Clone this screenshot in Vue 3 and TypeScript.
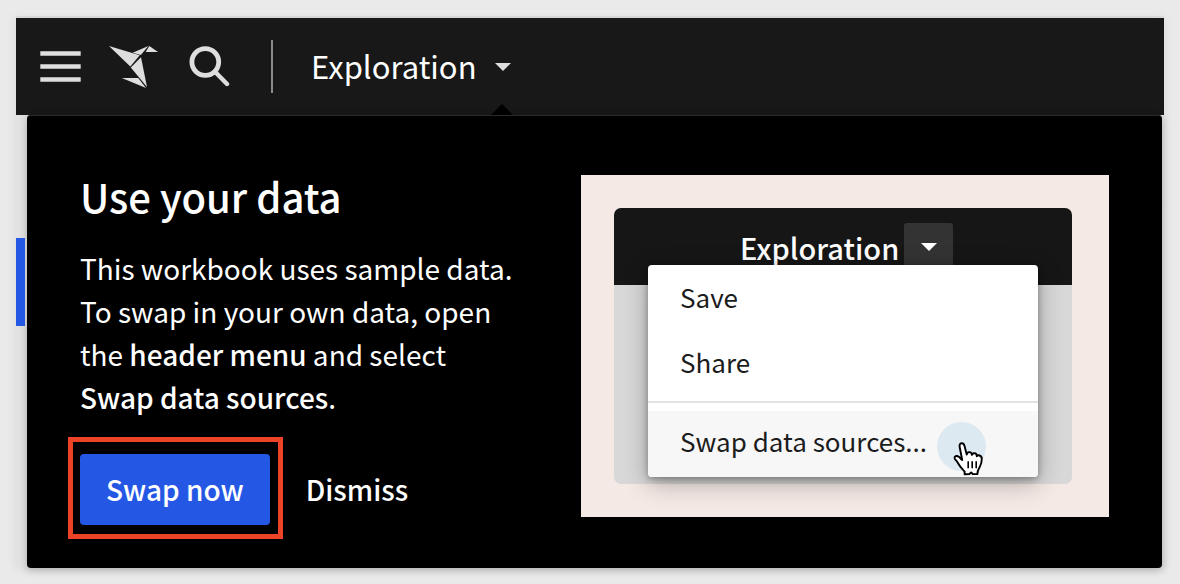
<script setup lang="ts">
import { ref } from 'vue'

interface MenuEntry {
  label: string
  active?: boolean
}

const title = 'Exploration'
const basicEntries: MenuEntry[] = [{ label: 'Save' }, { label: 'Share' }]
const sourceEntries: MenuEntry[] = [{ label: 'Swap data sources...', active: true }]
const open = ref(true)
</script>

<template>
  <main class="window">
    <header class="bar">
      <button class="icon-button" type="button" aria-label="Menu">
        <svg class="icon menu-icon" viewBox="0 0 41 32">
          <path d="M0.3 2.5h40.4M0.3 15.5h40.4M0.3 28.5h40.4" fill="none" stroke="#dedede" stroke-width="4.6" />
        </svg>
      </button>
      <a class="logo" href="#" aria-label="Home">
        <svg class="icon logo-icon" viewBox="0 -2 49 45">
          <g fill="#dedede">
            <path d="M0 0 30.7 9.3 21.3 20.5Z" />
            <path d="M23.6 6.8 39.4 0 31.8 8.9Z" />
            <path d="M40.3 0 49 6.1 36.7 6Z" />
            <path d="M32 11.3 38 41 21.8 21.6Z" />
            <path d="M12.8 32 29.2 32 37 42Z" />
          </g>
        </svg>
      </a>
      <button class="icon-button" type="button" aria-label="Search">
        <svg class="icon search-icon" viewBox="0 0 41 41">
          <circle cx="16.3" cy="16" r="13.4" fill="none" stroke="#dedede" stroke-width="4.8" />
          <path d="M26 25.8 38 38" fill="none" stroke="#dedede" stroke-width="4.4" stroke-linecap="round" />
        </svg>
      </button>
      <span class="rule"></span>
      <button class="workbook" type="button" :aria-expanded="open" @click="open = !open">
        <span class="workbook-name">{{ title }}</span>
        <span class="caret-slot">
          <svg class="caret" viewBox="0 0 16 8"><path d="M0 0h16L8 8Z" fill="#dedede" /></svg>
          <svg v-if="open" class="pointer" viewBox="0 0 22 11"><path d="M0 11 11 0 22 11Z" fill="#000" /></svg>
        </span>
      </button>
    </header>

    <div class="stage">
      <span class="accent"></span>
      <span class="tick"></span>
      <section v-if="open" class="panel">
        <div class="copy">
          <h1>Use your data</h1>
          <p>
            This workbook uses sample data. To swap in your own data, open the
            <strong>header menu</strong> and select <strong>Swap data sources</strong>.
          </p>
          <div class="actions">
            <div class="highlighted">
              <button class="primary" type="button">Swap now</button>
            </div>
            <button class="plain" type="button" @click="open = false">Dismiss</button>
          </div>
        </div>

        <div class="illustration">
          <div class="mock">
            <div class="mock-bar">
              <span class="mock-title">{{ title }}</span>
              <span class="mock-toggle">
                <svg class="mock-caret" viewBox="0 0 16 8"><path d="M0 0h16L8 8Z" fill="#fff" /></svg>
              </span>
            </div>
            <div class="menu">
              <ul class="group">
                <li v-for="entry in basicEntries" :key="entry.label">{{ entry.label }}</li>
              </ul>
              <ul class="group last">
                <li v-for="entry in sourceEntries" :key="entry.label" :class="{ active: entry.active }">
                  {{ entry.label }}
                  <span class="halo">
                    <svg class="hand" viewBox="0 0 32 34">
                      <path
                        d="M11.6 32.2v-2.6C9.8 27 7.4 25.5 5.4 21.8 4.2 19.5 3 18 1.8 16.8 1.2 15.2 2.3 13.6 4.2 14c1.9.5 3.2 2 4.4 3.6L9.2 18 6.7 5.2C6.3 2.9 7 1.4 8.5 1.2c1.5-.2 2.4.7 2.9 2.4l2.3 9c.3-1.7 1.1-2.6 2.7-2.5 1.7.1 2.4 1.2 2.5 2.8.4-1.3 1.5-1.9 2.9-1.6 1.5.3 2.1 1.4 2 2.9.6-.9 1.6-1.1 2.8-.7 1.4.5 2.2 1.7 2.2 3.4 0 4-.9 5.8-2.1 8.2-1.2 2.3-2.3 3.5-2.4 7l-4.6-.1-1.6-1.6-1.7 1.7Z"
                        fill="#fff"
                        stroke="#000"
                        stroke-width="1.9"
                        stroke-linejoin="round"
                      />
                      <path d="M15.2 19.2v7M19.2 19.2v7M23.2 19.2v7" fill="none" stroke="#000" stroke-width="1.6" />
                    </svg>
                  </span>
                </li>
              </ul>
            </div>
          </div>
        </div>
      </section>
    </div>
  </main>
</template>

<style>
body {
  background: #eaeaea;
}
</style>

<style scoped>
.window {
  margin: 18px 16px 16px;
  font-family: 'Noto Sans CJK SC', 'Noto Sans', sans-serif;
  color: #fff;
  background: #e2e2e2;
  box-shadow: 0 0 10px rgba(0, 0, 0, 0.08), 0 -2px 0 rgba(0, 0, 0, 0.05);
}

button {
  font: inherit;
  color: inherit;
  background: none;
  border: 0;
  padding: 0;
  cursor: pointer;
}

svg {
  display: block;
}

.bar {
  display: flex;
  align-items: center;
  height: 97px;
  padding-left: 24px;
  background: #181818;
}

.menu-icon {
  width: 41px;
  height: 32px;
}

.logo {
  margin-left: 28px;
}

.logo-icon {
  width: 49px;
  height: 45px;
}

.search-icon {
  width: 41px;
  height: 41px;
  margin-left: 31px;
}

.rule {
  width: 2px;
  height: 53px;
  margin-left: 41px;
  background: #8a8a8a;
}

.workbook {
  display: flex;
  align-self: stretch;
  align-items: center;
  margin-left: 38px;
  font-size: 31px;
  line-height: 48px;
}

.workbook-name {
  padding-bottom: 2px;
}

.caret-slot {
  position: relative;
  display: flex;
  align-self: stretch;
  align-items: center;
  margin-left: 18px;
}

.caret {
  width: 16px;
  height: 8px;
}

.pointer {
  position: absolute;
  bottom: 0;
  left: -4px;
  width: 22px;
  height: 11px;
}

.stage {
  position: relative;
  padding: 0 2px 0 11px;
}

.accent {
  position: absolute;
  top: 123px;
  left: 0;
  width: 9px;
  height: 88px;
  background: #2458e4;
}

.tick {
  position: absolute;
  top: 86px;
  right: 0;
  width: 2px;
  height: 2px;
  background: #c8c8c8;
}

.panel {
  display: flex;
  align-items: flex-start;
  justify-content: space-between;
  gap: 40px;
  padding: 57px 53px 43px;
  background: #000;
  border-radius: 4px;
  box-shadow: inset 0 1px 0 #2a2a2a, 0 2px 8px rgba(0, 0, 0, 0.24);
}

.copy {
  flex: 0 1 436px;
}

h1 {
  margin: 0;
  font-size: 40px;
  font-weight: 500;
  line-height: 48px;
}

p {
  margin: 27px 0 35px;
  font-size: 28px;
  line-height: 43px;
}

strong {
  font-weight: 500;
}

.actions {
  display: flex;
  align-items: center;
  gap: 36px;
  font-size: 28px;
  font-weight: 500;
  line-height: 43px;
}

.highlighted {
  position: relative;
}

.highlighted::after {
  content: '';
  position: absolute;
  inset: -17px -13px -14px -12px;
  border: 5px solid #ec4226;
  pointer-events: none;
}

.primary {
  padding: 14px 26px;
  background: #2458e4;
  border-radius: 4px;
}

.illustration {
  flex: 0 1 528px;
  box-sizing: border-box;
  margin-top: 3px;
  padding: 33px 37px 33px 33px;
  background: #f5e9e5;
}

.mock {
  position: relative;
  min-height: 276px;
  background: #d8d8d8;
  border-radius: 7px;
}

.mock-bar {
  display: flex;
  align-items: center;
  box-sizing: border-box;
  height: 77px;
  padding-left: 126px;
  background: #161616;
  border-radius: 7px 7px 0 0;
}

.mock-title {
  font-size: 29px;
  font-weight: 500;
  line-height: 48px;
}

.mock-toggle {
  display: flex;
  align-items: center;
  justify-content: center;
  width: 49px;
  height: 48px;
  margin-left: 5px;
  background: #333;
  border-radius: 3px;
}

.mock-caret {
  width: 16px;
  height: 8px;
}

.menu {
  position: absolute;
  top: 57px;
  left: 34px;
  right: 34px;
  color: #1c1c1c;
  background: #fff;
  border-radius: 4px;
  box-shadow: 0 6px 24px rgba(0, 0, 0, 0.3), 0 2px 6px rgba(0, 0, 0, 0.3);
}

.group {
  margin: 0;
  padding: 0 0 6px;
  list-style: none;
}

.group.last {
  padding: 8px 0 0;
  border-top: 2px solid #e3e3e3;
}

li {
  display: flex;
  align-items: center;
  box-sizing: border-box;
  height: 65px;
  padding: 0 0 2px 32px;
  font-size: 26px;
  line-height: 40px;
}

.active {
  height: 66px;
  padding-bottom: 6px;
  background: #f7f7f7;
  border-radius: 0 0 4px 4px;
}

.halo {
  position: relative;
  width: 49px;
  height: 49px;
  margin: 10px 0 0 10px;
  background: #dce9f1;
  border-radius: 50%;
}

.hand {
  position: absolute;
  top: 20px;
  left: 16px;
  width: 32px;
  height: 34px;
}
</style>
